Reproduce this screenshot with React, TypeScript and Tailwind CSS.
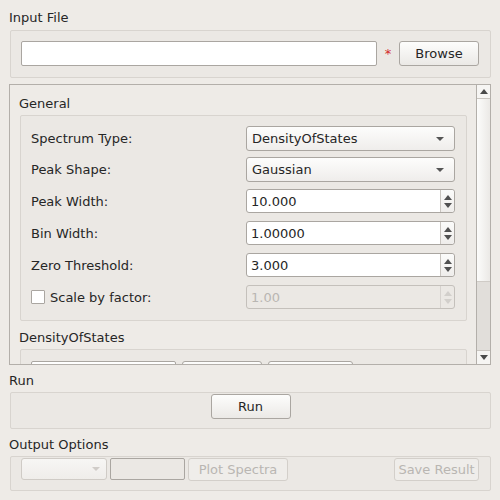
import React from "react";

const Tri = ({ dir = "down", color = "#4a4a4a" }: { dir?: "up" | "down"; color?: string }) => (
  <svg width="8" height="5" viewBox="0 0 8 5" className="block">
    {dir === "down" ? <path d="M0 0 L8 0 L4 5 Z" fill={color} /> : <path d="M0 5 L8 5 L4 0 Z" fill={color} />}
  </svg>
);

const Combo = ({ text }: { text: string }) => (
  <div className="w-[209px] h-[25px] border border-[#aaa6a1] rounded-[3px] bg-gradient-to-b from-[#fdfdfc] to-[#efedeb] flex items-center pl-[5px] pr-[10px]">
    <span>{text}</span>
    <span className="ml-auto">
      <svg width="8" height="4" viewBox="0 0 8 4" className="block">
        <path d="M0 0 L8 0 L4 4 Z" fill="#555" />
      </svg>
    </span>
  </div>
);

const Spin = ({ text, disabled = false }: { text: string; disabled?: boolean }) => (
  <div
    className={
      "w-[209px] h-[24px] border rounded-[3px] flex " +
      (disabled ? "border-[#c4c0bb] bg-[#ebe8e4] text-[#b9b6b2]" : "border-[#aaa6a1] bg-white")
    }
  >
    <div className="flex-1 flex items-center pl-[4px]">{text}</div>
    <div
      className={
        "w-[14px] border-l flex flex-col items-center justify-center gap-[3px] " +
        (disabled ? "border-[#d6d2ce]" : "border-[#c9c5c0] bg-gradient-to-b from-[#fbfbfa] to-[#efedeb] rounded-r-[3px]")
      }
    >
      <Tri dir="up" color={disabled ? "#d2cfcb" : "#505050"} />
      <Tri dir="down" color={disabled ? "#d2cfcb" : "#505050"} />
    </div>
  </div>
);

const Row = ({ label, children, check = false }: { label: string; children: React.ReactNode; check?: boolean }) => (
  <div className="flex items-center justify-between">
    <div className="flex items-center">
      {check && <div className="w-[14px] h-[14px] border border-[#aaa6a1] bg-white mr-[5px] rounded-[1px]" />}
      <span>{label}</span>
    </div>
    {children}
  </div>
);

export default function App() {
  return (
    <div className="w-[500px] h-[500px] overflow-hidden bg-[#eeebe7] font-['DejaVu_Sans',sans-serif] text-[13px] leading-[15px] text-[#262626]">
      <div className="pt-[10px] pl-[9px]">Input File</div>
      <div className="mt-[5px] ml-[10px] w-[481px] h-[48px] border border-[#d8d4cf] rounded-[2px] bg-[#ebe8e4] pt-[10px] pl-[10px] flex items-start">
        <div className="w-[356px] h-[25px] bg-white border border-[#aaa6a1] rounded-[2px]" />
        <div className="w-[22px] h-[25px] flex items-center justify-center text-[#d22a2a]">*</div>
        <div className="w-[80px] h-[25px] border border-[#aaa6a1] rounded-[3px] bg-gradient-to-b from-[#fdfdfc] to-[#ebe9e6] flex items-center justify-center">
          Browse
        </div>
      </div>

      <div className="mt-[6px] ml-[9px] w-[482px] h-[281px] border border-[#b3afaa] flex">
        <div className="flex-1 overflow-hidden pt-[11px] pl-[9px]">
          <div>General</div>
          <div className="mt-[4px] ml-[1px] w-[447px] border border-[#d8d4cf] rounded-[2px] bg-[#ebe8e4] pt-[10px] pb-[11px] pl-[10px] pr-[11px] flex flex-col">
            <Row label="Spectrum Type:">
              <Combo text="DensityOfStates" />
            </Row>
            <div className="mt-[6px]">
              <Row label="Peak Shape:">
                <Combo text="Gaussian" />
              </Row>
            </div>
            <div className="mt-[7px]">
              <Row label="Peak Width:">
                <Spin text="10.000" />
              </Row>
            </div>
            <div className="mt-[8px]">
              <Row label="Bin Width:">
                <Spin text="1.00000" />
              </Row>
            </div>
            <div className="mt-[8px]">
              <Row label="Zero Threshold:">
                <Spin text="3.000" />
              </Row>
            </div>
            <div className="mt-[8px]">
              <Row label="Scale by factor:" check>
                <Spin text="1.00" disabled />
              </Row>
            </div>
          </div>
          <div className="mt-[9px]">DensityOfStates</div>
          <div className="mt-[4px] ml-[1px] w-[447px] h-[40px] border border-[#d8d4cf] rounded-[2px] bg-[#ebe8e4] pt-[11px] pl-[10px] flex gap-[6px]">
            <div className="w-[145px] h-[24px] bg-white border border-[#aaa6a1] rounded-[2px]" />
            <div className="w-[80px] h-[24px] border border-[#aaa6a1] rounded-[3px] bg-gradient-to-b from-[#fdfdfc] to-[#ebe9e6]" />
            <div className="w-[85px] h-[24px] border border-[#aaa6a1] rounded-[3px] bg-gradient-to-b from-[#fdfdfc] to-[#ebe9e6]" />
          </div>
        </div>
        <div className="w-[14px] border-l border-[#b3afaa] flex flex-col">
          <div className="h-[14px] border-b border-[#c9c5c0] bg-[#f6f5f3] flex items-center justify-center">
            <Tri dir="up" color="#4a4a4a" />
          </div>
          <div className="h-[183px] bg-gradient-to-r from-[#fcfcfb] to-[#ebe9e6] border-b border-[#cfcbc6]" />
          <div className="flex-1 bg-[#e1deda]" />
          <div className="h-[14px] border-t border-[#c9c5c0] bg-[#f6f5f3] flex items-center justify-center">
            <Tri dir="down" color="#4a4a4a" />
          </div>
        </div>
      </div>

      <div className="mt-[8px] pl-[9px]">Run</div>
      <div className="mt-[4px] ml-[10px] w-[481px] h-[37px] border border-[#d8d4cf] rounded-[2px] bg-[#ebe8e4] pt-[1px] flex justify-center">
        <div className="w-[80px] h-[25px] border border-[#aaa6a1] rounded-[3px] bg-gradient-to-b from-[#fdfdfc] to-[#ebe9e6] flex items-center justify-center">
          Run
        </div>
      </div>

      <div className="mt-[8px] pl-[9px]">Output Options</div>
      <div className="mt-[4px] ml-[10px] w-[481px] h-[35px] border border-[#d8d4cf] rounded-[2px] bg-[#ebe8e4] pt-[1px] pl-[10px] pr-[11px] flex items-start text-[#b9b6b2]">
        <div className="w-[86px] h-[22px] border border-[#cfcbc6] rounded-[3px] bg-gradient-to-b from-[#f7f6f4] to-[#efedea] flex items-center justify-end pr-[6px]">
          <svg width="8" height="4" viewBox="0 0 8 4" className="block">
            <path d="M0 0 L8 0 L4 4 Z" fill="#d0ccc8" />
          </svg>
        </div>
        <div className="ml-[3px] w-[75px] h-[22px] border border-[#aaa6a1] rounded-[2px] bg-[#ebe8e4]" />
        <div className="ml-[3px] w-[100px] h-[23px] border border-[#d3cfca] rounded-[3px] bg-[#efedea] flex items-center justify-center">
          Plot Spectra
        </div>
        <div className="ml-auto w-[85px] h-[23px] border border-[#d3cfca] rounded-[3px] bg-[#efedea] flex items-center justify-center">
          Save Result
        </div>
      </div>
    </div>
  );
}
